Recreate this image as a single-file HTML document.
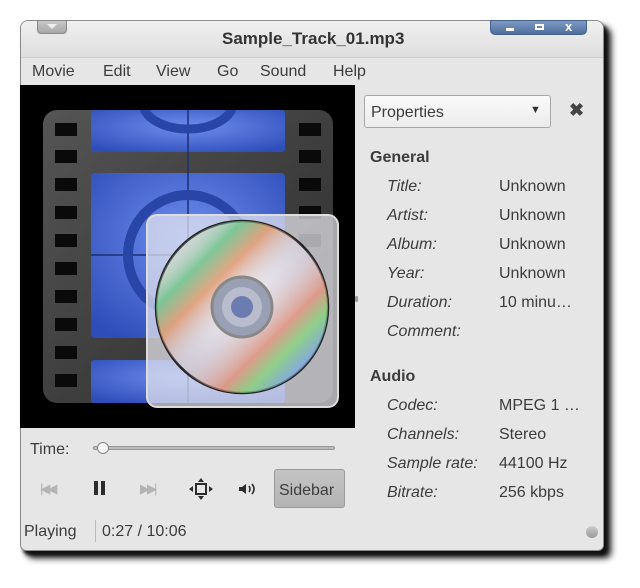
<!DOCTYPE html>
<html><head><meta charset="utf-8"><style>
*{margin:0;padding:0;box-sizing:border-box}
body{width:640px;height:588px;background:#fff;position:relative;overflow:hidden;font-family:"Liberation Sans",sans-serif;color:#3c3c3c}
.a{position:absolute;white-space:nowrap}
.win{position:absolute;left:20px;top:20px;width:584px;height:531px;background:#e6e6e6;border-radius:8px 8px 6px 6px;border:1px solid #8a8a8a;box-shadow:7px 7px 7px #111, 3px 4px 3px #222}
.t{font-size:16px;line-height:18px}
.i{font-style:italic}
</style></head><body>
<div class="win"></div>
<div class="a" style="left:21px;top:21px;width:582px;height:36px;background:linear-gradient(#f0f0f0,#dedede);border-radius:7px 7px 0 0"></div>
<div class="a" style="left:37px;top:20px;width:30px;height:14px;background:linear-gradient(#c8c8c8,#a8a8a8);border-radius:0 0 4px 4px;border:1px solid #888"></div>
<div class="a" style="left:47px;top:24px;width:0;height:0;border-left:5px solid transparent;border-right:5px solid transparent;border-top:5px solid #eee"></div>
<div class="a t" style="left:222px;top:30px;font-weight:bold;font-size:17px;color:#333">Sample_Track_01.mp3</div>
<div class="a" style="left:490px;top:20px;width:97px;height:15px;background:linear-gradient(#7e9ac4,#4f6e9c);border-radius:0 0 5px 5px;border:1px solid #45628c"></div>
<div class="a" style="left:506px;top:28px;width:8px;height:3px;background:#fff"></div>
<div class="a" style="left:535px;top:24px;width:9px;height:6px;border:2px solid #fff"></div>
<div class="a" style="left:565px;top:19px;color:#fff;font-size:13px;font-weight:bold">x</div>
<div class="a" style="left:21px;top:57px;width:582px;height:1px;background:#cfcfcf"></div>
<div class="a t" style="left:32px;top:63px">Movie</div>
<div class="a t" style="left:103px;top:63px">Edit</div>
<div class="a t" style="left:156px;top:63px">View</div>
<div class="a t" style="left:217px;top:63px">Go</div>
<div class="a t" style="left:260px;top:63px">Sound</div>
<div class="a t" style="left:333px;top:63px">Help</div>
<svg class="a" style="left:20px;top:85px" width="335" height="343" viewBox="0 0 335 343">
<defs>
<linearGradient id="fg" x1="0" y1="0" x2="1" y2="1"><stop offset="0" stop-color="#555"/><stop offset="1" stop-color="#2a2a2a"/></linearGradient>
<radialGradient id="bl" cx="0.5" cy="0.4" r="0.7"><stop offset="0" stop-color="#6f8ef0"/><stop offset="1" stop-color="#2f4db8"/></radialGradient>
<radialGradient id="cd" cx="0.45" cy="0.4" r="0.6"><stop offset="0" stop-color="#f4f0f4"/><stop offset="1" stop-color="#c8c4d0"/></radialGradient>
<linearGradient id="rb" x1="0" y1="0" x2="1" y2="1"><stop offset="0.1" stop-color="#e0e0e0" stop-opacity="0"/><stop offset="0.25" stop-color="#60c080"/><stop offset="0.35" stop-color="#e09060"/><stop offset="0.5" stop-color="#d8d0e0" stop-opacity="0"/><stop offset="0.68" stop-color="#e08a70"/><stop offset="0.76" stop-color="#7ad070"/><stop offset="0.85" stop-color="#70a0e0"/><stop offset="0.95" stop-color="#ddd" stop-opacity="0"/></linearGradient>
<clipPath id="c1"><rect x="71" y="25" width="194" height="42"/></clipPath>
</defs>
<rect width="335" height="343" fill="#000"/>
<rect x="23" y="25" width="290" height="293" rx="14" fill="url(#fg)"/>
<g fill="#0a0a0a">
<rect x="35" y="38" width="22" height="13"/><rect x="35" y="65" width="22" height="13"/><rect x="35" y="93" width="22" height="13"/><rect x="35" y="121" width="22" height="13"/><rect x="35" y="149" width="22" height="13"/><rect x="35" y="177" width="22" height="13"/><rect x="35" y="205" width="22" height="13"/><rect x="35" y="233" width="22" height="13"/><rect x="35" y="261" width="22" height="13"/><rect x="35" y="289" width="22" height="13"/>
<rect x="279" y="38" width="22" height="13"/><rect x="279" y="65" width="22" height="13"/><rect x="279" y="93" width="22" height="13"/><rect x="279" y="121" width="22" height="13"/><rect x="279" y="149" width="22" height="13"/>
</g>
<rect x="71" y="25" width="194" height="42" rx="3" fill="url(#bl)"/>
<rect x="71" y="88" width="194" height="165" rx="4" fill="url(#bl)"/>
<rect x="71" y="275" width="194" height="43" rx="3" fill="url(#bl)"/>
<line x1="168" y1="25" x2="168" y2="318" stroke="#1d2f70" stroke-width="1.5"/>
<line x1="71" y1="170" x2="265" y2="170" stroke="#1d2f70" stroke-width="1.5"/>
<circle cx="168" cy="170" r="60" fill="none" stroke="#2a45a8" stroke-width="10"/>
<ellipse cx="168" cy="18" rx="45" ry="26" fill="none" stroke="#2a45a8" stroke-width="9" clip-path="url(#c1)"/>
<rect x="127" y="130" width="191" height="192" rx="10" fill="#e8e8ee" fill-opacity="0.72" stroke="#ddd" stroke-width="2"/>
<circle cx="222" cy="222" r="86" fill="url(#cd)" stroke="#222" stroke-width="2.5"/>
<circle cx="222" cy="222" r="86" fill="url(#rb)" opacity="0.75"/>
<circle cx="222" cy="222" r="30" fill="#9aa0b4" stroke="#888" stroke-width="3"/>
<circle cx="222" cy="222" r="20" fill="#b8bccc"/>
<circle cx="222" cy="222" r="11" fill="#6c7cb0"/>
</svg>
<div class="a" style="left:355px;top:296px;width:3px;height:6px;background:#999;border-radius:2px"></div>
<div class="a t" style="left:30px;top:441px">Time:</div>
<div class="a" style="left:93px;top:446px;width:242px;height:4px;background:#bbb;border-radius:2px;border:1px solid #999"></div>
<div class="a" style="left:97px;top:442px;width:12px;height:12px;background:#f4f4f4;border:1px solid #888;border-radius:50%"></div>
<div class="a" style="left:40px;top:481px;font-size:13px;color:#b4b4b4;letter-spacing:-3px">|◀◀</div>
<div class="a" style="left:94px;top:481px;width:4px;height:14px;background:#2c2c2c"></div>
<div class="a" style="left:101px;top:481px;width:4px;height:14px;background:#2c2c2c"></div>
<div class="a" style="left:140px;top:481px;font-size:13px;color:#b4b4b4;letter-spacing:-3px">▶▶|</div>
<svg class="a" style="left:188px;top:477px" width="26" height="24" viewBox="0 0 26 24"><rect x="8" y="7" width="10" height="10" fill="none" stroke="#2c2c2c" stroke-width="2"/><path d="M13 1l3 4h-6zM13 23l3-4h-6zM1 12l4-3v6zM25 12l-4-3v6z" fill="#2c2c2c"/></svg>
<svg class="a" style="left:237px;top:481px" width="20" height="16" viewBox="0 0 20 16"><path d="M2 6h3l4-3v10l-4-3H2z" fill="#2c2c2c"/><path d="M12 5q2 3 0 6M15 3q4 5 0 10" fill="none" stroke="#2c2c2c" stroke-width="1.6"/></svg>
<div class="a" style="left:274px;top:469px;width:71px;height:39px;background:linear-gradient(#c4c4c4,#b4b4b4);border:1px solid #9a9a9a;border-radius:3px"></div>
<div class="a t" style="left:279px;top:482px">Sidebar</div>
<div class="a t" style="left:24px;top:523px">Playing</div>
<div class="a" style="left:95px;top:520px;width:1px;height:22px;background:#bbb"></div>
<div class="a t" style="left:102px;top:523px">0:27 / 10:06</div>
<div class="a" style="left:586px;top:526px;width:12px;height:12px;border-radius:50%;background:linear-gradient(#ccc,#999)"></div>
<div class="a" style="left:364px;top:95px;width:187px;height:33px;background:linear-gradient(#fafafa,#ececec);border:1px solid #a8a8a8;border-radius:3px"></div>
<div class="a t" style="left:371px;top:104px">Properties</div>
<div class="a" style="left:530px;top:104px;font-size:11px;color:#333">▼</div>
<div class="a" style="left:569px;top:100px;font-size:18px;font-weight:bold;color:#444">✖</div>
<div class="a t" style="left:370px;top:149px;font-weight:bold">General</div>
<div class="a t i" style="left:387px;top:178px">Title:</div><div class="a t" style="left:499px;top:178px">Unknown</div>
<div class="a t i" style="left:387px;top:207px">Artist:</div><div class="a t" style="left:499px;top:207px">Unknown</div>
<div class="a t i" style="left:387px;top:236px">Album:</div><div class="a t" style="left:499px;top:236px">Unknown</div>
<div class="a t i" style="left:387px;top:265px">Year:</div><div class="a t" style="left:499px;top:265px">Unknown</div>
<div class="a t i" style="left:387px;top:294px">Duration:</div><div class="a t" style="left:499px;top:294px">10 minu…</div>
<div class="a t i" style="left:387px;top:323px">Comment:</div>
<div class="a t" style="left:370px;top:368px;font-weight:bold">Audio</div>
<div class="a t i" style="left:387px;top:397px">Codec:</div><div class="a t" style="left:499px;top:397px">MPEG 1 …</div>
<div class="a t i" style="left:387px;top:426px">Channels:</div><div class="a t" style="left:499px;top:426px">Stereo</div>
<div class="a t i" style="left:387px;top:455px">Sample rate:</div><div class="a t" style="left:499px;top:455px">44100 Hz</div>
<div class="a t i" style="left:387px;top:484px">Bitrate:</div><div class="a t" style="left:499px;top:484px">256 kbps</div>
</body></html>
